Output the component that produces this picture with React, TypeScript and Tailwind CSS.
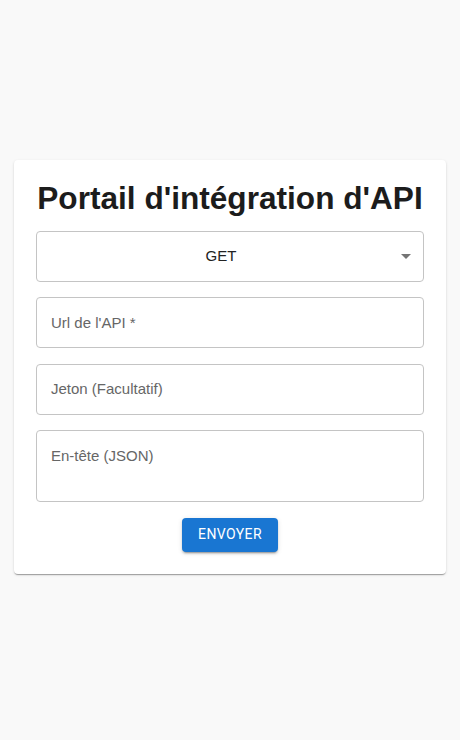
import React from "react";

function Field({ label, tall }: { label: string; tall?: boolean }) {
  return (
    <div
      className={`w-full rounded-[4px] border border-[#c4c4c4] bg-white px-[14px] text-[15px] text-[#666666] ${
        tall ? "h-[72px] pt-[14px]" : "flex h-[51px] items-center"
      }`}
    >
      <span className="leading-[18px]">{label}</span>
    </div>
  );
}

export default function App() {
  return (
    <div
      className="min-h-screen bg-[#f9f9f9] pt-[160px]"
      style={{ fontFamily: '"Liberation Sans", Arial, sans-serif' }}
    >
      <div className="mx-auto w-[432px] rounded-[4px] bg-white px-[22px] pb-[22px] pt-[20px] shadow-[0_2px_1px_-1px_rgba(0,0,0,0.2),0_1px_1px_0_rgba(0,0,0,0.14),0_1px_3px_0_rgba(0,0,0,0.12)]">
        <h1 className="-mx-[10px] mb-[14px] whitespace-nowrap text-center text-[31.6px] font-bold leading-[37px] text-[#1c1c1c]">
          Portail d'intégration d'API
        </h1>
        <div className="flex flex-col gap-[15.4px]">
          <div className="relative flex h-[51px] w-full items-center justify-center rounded-[4px] border border-[#c4c4c4] bg-white pl-[14px] pr-[32px] text-[15px] text-[#222222]">
            <span>GET</span>
            <svg
              className="absolute right-[12px] top-[22px]"
              width="10"
              height="5"
              viewBox="0 0 10 5"
            >
              <polygon points="0,0 10,0 5,5" fill="#757575" />
            </svg>
          </div>
          <Field label="Url de l'API *" />
          <Field label="Jeton (Facultatif)" />
          <Field label="En-tête (JSON)" tall />
          <div className="flex justify-center">
            <button
              className="h-[34px] w-[96px] rounded-[4px] bg-[#1976d2] text-[14px] font-normal uppercase tracking-[0.4px] text-white shadow-[0_3px_1px_-2px_rgba(0,0,0,0.2),0_2px_2px_0_rgba(0,0,0,0.14),0_1px_5px_0_rgba(0,0,0,0.12)]"
              style={{ fontFamily: "Roboto, sans-serif" }}
            >
              Envoyer
            </button>
          </div>
        </div>
      </div>
    </div>
  );
}
